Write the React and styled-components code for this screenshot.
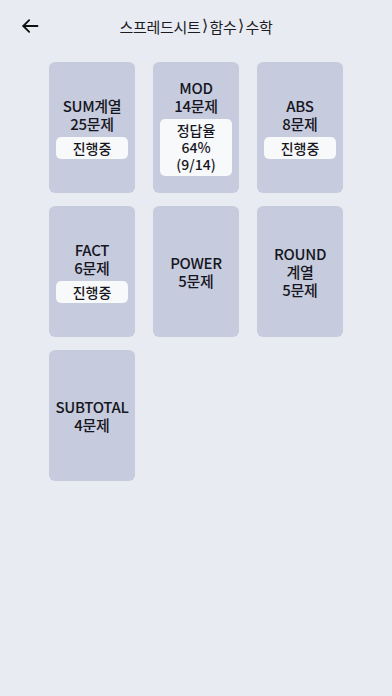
import React from "react";
import styled, { createGlobalStyle } from "styled-components";

const GlobalStyle = createGlobalStyle`
  html, body {
    margin: 0;
    padding: 0;
    background: #e8ebf2;
    font-family: "Noto Sans CJK KR", "Noto Sans", sans-serif;
  }
`;

const Page = styled.div`
  width: 392px;
  min-height: 696px;
  background: #e8ebf2;
  display: flex;
  flex-direction: column;
`;

const Header = styled.div`
  position: relative;
  height: 52px;
  display: flex;
  align-items: center;
  justify-content: center;
`;

const BackButton = styled.button`
  position: absolute;
  left: 17px;
  top: 13px;
  width: 26px;
  height: 26px;
  padding: 0;
  border: 0;
  background: none;
  display: flex;
  align-items: center;
  justify-content: center;
  color: #111;
`;

const Title = styled.div`
  font-size: 15px;
  color: #1c1c24;
  letter-spacing: -0.3px;
  display: flex;
  align-items: center;
`;

const Sep = styled.span`
  display: inline-block;
  width: 7px;
  font-family: "DejaVu Sans", sans-serif;
  font-size: 16px;
  line-height: 16px;
  text-align: center;
  margin: 0 1px;
`;

const Grid = styled.div`
  display: grid;
  grid-template-columns: repeat(3, 86px);
  grid-auto-rows: 131px;
  column-gap: 18px;
  row-gap: 13px;
  justify-content: center;
  margin-top: 10px;
`;

const Card = styled.div`
  background: #c6cbdd;
  border-radius: 6px;
  display: flex;
  flex-direction: column;
  align-items: center;
  justify-content: center;
  padding: 0 7px;
`;

const Label = styled.div`
  font-size: 15px;
  font-weight: 500;
  line-height: 18px;
  color: #16161e;
  text-align: center;
  letter-spacing: -0.3px;
`;

const Badge = styled.div`
  align-self: stretch;
  margin-top: 4px;
  background: #f8f9fb;
  border-radius: 5px;
  padding: ${props => (props.tall ? "3px 0" : "2px 0")};
  font-size: 14px;
  font-weight: 500;
  line-height: ${props => (props.tall ? "17px" : "18px")};
  color: #16161e;
  text-align: center;
`;

const items = [
  { lines: ["SUM계열", "25문제"], badge: ["진행중"] },
  { lines: ["MOD", "14문제"], badge: ["정답율", "64%", "(9/14)"] },
  { lines: ["ABS", "8문제"], badge: ["진행중"] },
  { lines: ["FACT", "6문제"], badge: ["진행중"] },
  { lines: ["POWER", "5문제"] },
  { lines: ["ROUND", "계열", "5문제"] },
  { lines: ["SUBTOTAL", "4문제"] }
];

export default function App() {
  return (
    <Page>
      <GlobalStyle />
      <Header>
        <BackButton aria-label="back">
          <svg width="20" height="20" viewBox="0 0 24 24" fill="none" stroke="currentColor" strokeWidth="2.2" strokeLinecap="round" strokeLinejoin="round">
            <path d="M21 12H4" />
            <path d="M11 5l-7 7 7 7" />
          </svg>
        </BackButton>
        <Title>
          스프레드시트<Sep>⟩</Sep>함수<Sep>⟩</Sep>수학
        </Title>
      </Header>
      <Grid>
        {items.map((item, i) => (
          <Card key={i}>
            {item.lines.map(l => (
              <Label key={l}>{l}</Label>
            ))}
            {item.badge && (
              <Badge tall={item.badge.length > 1}>
                {item.badge.map(b => (
                  <div key={b}>{b}</div>
                ))}
              </Badge>
            )}
          </Card>
        ))}
      </Grid>
    </Page>
  );
}
